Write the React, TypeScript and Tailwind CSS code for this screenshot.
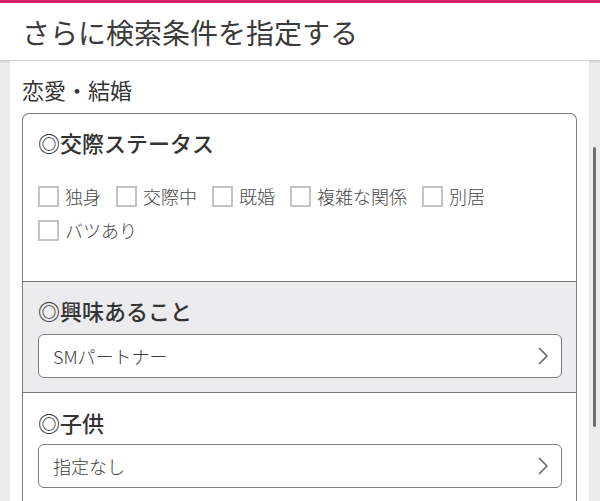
import React from "react";

const font = { fontFamily: '"Noto Sans CJK JP", "Noto Sans", sans-serif' };

const statuses = ["独身", "交際中", "既婚", "複雑な関係", "別居", "バツあり"];

function Chevron() {
  return (
    <svg width="12" height="18" viewBox="0 0 12 18" fill="none" className="shrink-0">
      <path d="M2.5 1.5 L10 9 L2.5 16.5" stroke="#6b6b6b" strokeWidth="1.7" strokeLinecap="round" strokeLinejoin="round" />
    </svg>
  );
}

function SelectBox({ value }: { value: string }) {
  return (
    <button
      type="button"
      className="flex h-[44px] w-full items-center justify-between rounded-[6px] border border-[#7d7d7d] bg-white pl-[14px] pr-[12px] text-left text-[18px] font-light text-[#3c3c3c]"
    >
      <span>{value}</span>
      <Chevron />
    </button>
  );
}

function Heading({ children }: { children: React.ReactNode }) {
  return <h3 className="text-[22px] font-medium leading-[30px] text-[#333]">◎{children}</h3>;
}

export default function App() {
  return (
    <div style={font} className="flex h-[501px] w-[600px] flex-col overflow-hidden bg-[#ececec]">
      <div className="h-[3px] shrink-0 bg-[#d8236f]" />
      <header className="flex h-[58px] shrink-0 items-center border-b border-[#cfcfcf] bg-white px-[22px] shadow-[0_1px_2px_rgba(0,0,0,0.12)]">
        <h1 className="text-[28px] leading-none text-[#3a3a3a]">さらに検索条件を指定する</h1>
      </header>

      <div className="flex min-h-0 flex-1">
        <div className="w-[10px] shrink-0" />
        <main className="flex-1 bg-white px-[12px] pt-[14px]">
          <h2 className="text-[22px] leading-[28px] text-[#333]">恋愛・結婚</h2>

          <div className="mt-[10px] rounded-t-[7px] border border-b-0 border-[#7a7a7a]">
            <section className="px-[15px] pb-[40px] pt-[13px]">
              <Heading>交際ステータス</Heading>
              <div className="mt-[29px] flex flex-wrap gap-x-[15px] gap-y-[13px]">
                {statuses.map((s) => (
                  <label key={s} className="flex items-center gap-[6px] text-[18px] font-light leading-[21px] text-[#484848]">
                    <span className="h-[21px] w-[21px] shrink-0 border-2 border-[#c3c3c3] bg-white" />
                    {s}
                  </label>
                ))}
              </div>
            </section>

            <section className="border-t border-[#7a7a7a] bg-[#ececef] pb-[14px] pl-[15px] pr-[14px] pt-[13px]">
              <Heading>興味あること</Heading>
              <div className="mt-[9px]">
                <SelectBox value="SMパートナー" />
              </div>
            </section>

            <section className="border-t border-[#7a7a7a] pb-[40px] pl-[15px] pr-[14px] pt-[14px]">
              <Heading>子供</Heading>
              <div className="mt-[7px]">
                <SelectBox value="指定なし" />
              </div>
            </section>
          </div>
        </main>
        <div className="flex w-[11px] shrink-0 justify-center">
          <div className="mt-[86px] h-[280px] w-[3px] rounded-full bg-[#6e6e6e]" />
        </div>
      </div>
    </div>
  );
}
